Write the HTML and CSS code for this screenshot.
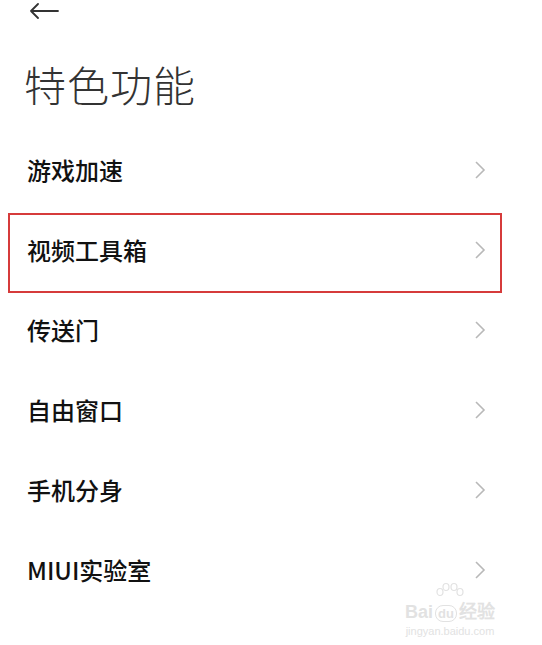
FILE: index.html
```html
<!DOCTYPE html>
<html lang="zh-CN">
<head>
    <meta charset="UTF-8">
    <meta name="viewport" content="width=device-width, initial-scale=1.0">
    <title>特色功能</title>
    <link rel="stylesheet" href="styles.css">
</head>
<body>
    <header class="topbar">
        <svg class="back" width="30" height="16" viewBox="0 0 30 16">
            <path d="M29 8H2M9 1L2 8l7 7" fill="none" stroke="#333" stroke-width="1.8" stroke-linecap="round" stroke-linejoin="round"/>
        </svg>
    </header>

    <h1 class="title">特色功能</h1>

    <ul class="menu">
        <li class="menu-item"><span>游戏加速</span><svg class="chev" width="12" height="20" viewBox="0 0 12 20"><path d="M2 2l8 8-8 8" fill="none" stroke="#b8b8b8" stroke-width="1.6"/></svg></li>
        <li class="menu-item marked"><span>视频工具箱</span><svg class="chev" width="12" height="20" viewBox="0 0 12 20"><path d="M2 2l8 8-8 8" fill="none" stroke="#b8b8b8" stroke-width="1.6"/></svg></li>
        <li class="menu-item"><span>传送门</span><svg class="chev" width="12" height="20" viewBox="0 0 12 20"><path d="M2 2l8 8-8 8" fill="none" stroke="#b8b8b8" stroke-width="1.6"/></svg></li>
        <li class="menu-item"><span>自由窗口</span><svg class="chev" width="12" height="20" viewBox="0 0 12 20"><path d="M2 2l8 8-8 8" fill="none" stroke="#b8b8b8" stroke-width="1.6"/></svg></li>
        <li class="menu-item"><span>手机分身</span><svg class="chev" width="12" height="20" viewBox="0 0 12 20"><path d="M2 2l8 8-8 8" fill="none" stroke="#b8b8b8" stroke-width="1.6"/></svg></li>
        <li class="menu-item"><span>MIUI实验室</span><svg class="chev" width="12" height="20" viewBox="0 0 12 20"><path d="M2 2l8 8-8 8" fill="none" stroke="#b8b8b8" stroke-width="1.6"/></svg></li>
    </ul>

    <!-- Wasserzeichen -->
    <div class="watermark">
        <svg class="paw" width="30" height="20" viewBox="0 0 30 20">
            <g fill="none" stroke="#e2e2e2" stroke-width="1.2">
                <ellipse cx="5" cy="10" rx="3" ry="3.5"/>
                <ellipse cx="11" cy="5" rx="3" ry="3.5"/>
                <ellipse cx="19" cy="5" rx="3" ry="3.5"/>
                <ellipse cx="25" cy="10" rx="3" ry="3.5"/>
            </g>
        </svg>
        <div class="wm-brand">Bai<span class="wm-du">du</span>经验</div>
        <div class="wm-url">jingyan.baidu.com</div>
    </div>
</body>
</html>
```

FILE: styles.css
```css
* {
    margin: 0;
    padding: 0;
    box-sizing: border-box;
}

body {
    background: #ffffff;
    font-family: "Noto Sans CJK SC", "Noto Sans", sans-serif;
    color: #111;
    width: 542px;
    height: 645px;
    position: relative;
    overflow: hidden;
}

/* Kopfzeile */
.topbar {
    height: 30px;
    padding-left: 29px;
    padding-top: 3px;
}

.back {
    display: block;
}

.title {
    margin-top: 33px;
    margin-bottom: 25px;
    padding-left: 24px;
    font-size: 42px;
    line-height: 42px;
    font-weight: 300;
    color: #333;
    letter-spacing: 1px;
}

/* Liste */
.menu {
    list-style: none;
}

.menu-item {
    position: relative;
    height: 80px;
    display: flex;
    align-items: center;
    justify-content: space-between;
    padding-left: 27px;
    padding-right: 56px;
    font-size: 24px;
    font-weight: 500;
    line-height: 24px;
    color: #111;
}

.chev {
    display: block;
}

.menu-item.marked::after {
    content: "";
    box-sizing: border-box;
    position: absolute;
    left: 8px;
    top: 3px;
    width: 494px;
    height: 80px;
    border: 2px solid #d63b3b;
    pointer-events: none;
}

/* Wasserzeichen */
.watermark {
    position: absolute;
    left: 398px;
    top: 582px;
    width: 104px;
    color: #e2e2e2;
    text-align: center;
    white-space: nowrap;
}

.paw {
    display: block;
    margin: 0 auto;
}

.wm-brand {
    font-family: "Liberation Sans", sans-serif;
    font-size: 18px;
    line-height: 20px;
    font-weight: 700;
}

.wm-du {
    font-size: 13px;
    padding: 0 2px;
    border: 1px solid #e2e2e2;
    border-radius: 8px;
    margin: 0 2px;
}

.wm-url {
    font-family: "Liberation Sans", sans-serif;
    font-size: 11px;
    line-height: 13px;
    margin-top: 1px;
}
```
